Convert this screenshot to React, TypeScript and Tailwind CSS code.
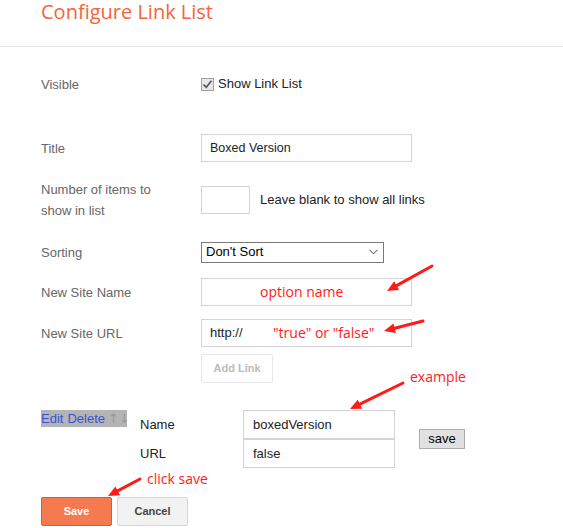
import React from 'react';

const sans = { fontFamily: '"Liberation Sans", Arial, sans-serif' };

function Arrow({ x1, y1, x2, y2 }: { x1: number; y1: number; x2: number; y2: number }) {
  // red annotation arrow, head at (x2, y2)
  const dx = x2 - x1;
  const dy = y2 - y1;
  const len = Math.hypot(dx, dy);
  const ux = dx / len;
  const uy = dy / len;
  const head = 11;
  const bx = x2 - ux * head;
  const by = y2 - uy * head;
  const px = -uy * 5;
  const py = ux * 5;
  return (
    <g>
      <line x1={x1} y1={y1} x2={bx} y2={by} stroke="#ff1a1a" strokeWidth={3} strokeLinecap="round" />
      <polygon points={`${x2},${y2} ${bx + px},${by + py} ${bx - px},${by - py}`} fill="#ff1a1a" />
    </g>
  );
}

function Row({ label, children, className = '' }: { label: React.ReactNode; children: React.ReactNode; className?: string }) {
  return (
    <div className={`flex items-center h-[28px] ${className}`}>
      <div className="w-[160px] shrink-0 text-[13px] leading-[21px] text-[#666]">{label}</div>
      <div className="flex items-center">{children}</div>
    </div>
  );
}

export default function App() {
  return (
    <div className="relative w-[563px] h-[528px] bg-white overflow-hidden" style={sans}>
      <div className="h-[47px] border-b border-[#e5e5e5] pl-[41px]">
        <h1
          className="text-[20px] leading-[24px] text-[#f5643c] font-normal"
          style={{ fontFamily: '"Open Sans", sans-serif' }}
        >
          Configure Link List
        </h1>
      </div>

      <div className="pl-[41px]">
        <Row label="Visible" className="mt-[23px]">
          <span className="w-[13px] h-[13px] border border-[#a0a0a0] bg-[#e6e6e6] flex items-center justify-center">
            <svg width="11" height="11" viewBox="0 0 11 11">
              <path d="M1.5 5.5 L4.2 8.3 L9.5 1.8" fill="none" stroke="#555" strokeWidth="1.6" />
            </svg>
          </span>
          <span className="ml-[4px] text-[13px] text-[#222]">Show Link List</span>
        </Row>

        <Row label="Title" className="mt-[36px]">
          <div className="w-[211px] h-[28px] border border-[#d4d4d4] pl-[8px] flex items-center text-[12.5px] text-[#222]">
            Boxed Version
          </div>
        </Row>

        <Row label={<div className="max-w-[125px]">Number of items to show in list</div>} className="mt-[24px]">
          <div className="w-[49px] h-[28px] border border-[#d4d4d4]" />
          <span className="ml-[10px] text-[13px] text-[#222]">Leave blank to show all links</span>
        </Row>

        <Row label="Sorting" className="mt-[24px]">
          <div className="w-[183px] h-[21px] border border-[#7a7a7a] pl-[4px] pr-[5px] flex items-center justify-between text-[13px] text-black">
            <span>Don't Sort</span>
            <svg width="9" height="6" viewBox="0 0 9 6">
              <path d="M0.5 0.8 L4.5 4.8 L8.5 0.8" fill="none" stroke="#444" strokeWidth="1" />
            </svg>
          </div>
        </Row>

        <Row label="New Site Name" className="mt-[12px]">
          <div className="w-[211px] h-[28px] border border-[#d4d4d4]" />
        </Row>

        <Row label="New Site URL" className="mt-[13px]">
          <div className="w-[211px] h-[28px] border border-[#d4d4d4] pl-[8px] flex items-center text-[13px] text-[#222]">
            http://
          </div>
        </Row>

        <div className="mt-[7px] ml-[160px] w-[72px] h-[29px] border border-[#e8e8e8] rounded-[2px] flex items-center justify-center text-[11px] font-bold text-[#bbb]">
          Add Link
        </div>

        <div className="mt-[27px] flex items-start">
          <div className="w-[86px] h-[17px] bg-[#b4b4b4] flex items-center text-[13px] leading-[17px] whitespace-nowrap">
            <span className="text-[#3456d6]">Edit</span>
            <span className="ml-[4px] text-[#3456d6]">Delete</span>
            <span
              className="ml-[3px] text-[13px] text-[#999]"
              style={{ fontFamily: '"DejaVu Sans", sans-serif' }}
            >
              ↑↓
            </span>
          </div>
          <div className="ml-[13px] flex items-center">
            <div className="flex flex-col">
              <div className="flex items-center h-[29px]">
                <span className="w-[103px] text-[13px] text-[#222]">Name</span>
                <div className="w-[152px] h-[29px] border border-[#d4d4d4] pl-[9px] flex items-center text-[13px] text-[#222]">
                  boxedVersion
                </div>
              </div>
              <div className="flex items-center h-[29px]">
                <span className="w-[103px] text-[13px] text-[#222]">URL</span>
                <div className="w-[152px] h-[29px] border border-[#d4d4d4] pl-[9px] flex items-center text-[13px] text-[#222]">
                  false
                </div>
              </div>
            </div>
            <button className="ml-[24px] w-[46px] h-[20px] bg-[#e1e1e1] border border-[#adadad] text-[13px] leading-[18px] text-black">
              save
            </button>
          </div>
        </div>

        <div className="mt-[29px] flex gap-[5px]">
          <button className="w-[71px] h-[29px] bg-[#f67a4f] border border-[#e05a2c] rounded-[2px] text-[11px] font-bold text-white">
            Save
          </button>
          <button className="w-[71px] h-[29px] bg-[#f2f2f2] border border-[#d6d6d6] rounded-[2px] text-[11px] font-bold text-[#444]">
            Cancel
          </button>
        </div>
      </div>

      {/* red annotations laid over the form */}
      <div
        className="absolute inset-0 pointer-events-none text-[14px] text-[#ff1a1a]"
        style={{ fontFamily: '"Open Sans", sans-serif' }}
      >
        <span className="absolute left-[260px] top-[282px] leading-[20px]">option name</span>
        <span className="absolute left-[273px] top-[323px] leading-[20px]">"true" or "false"</span>
        <span className="absolute left-[410px] top-[367px] leading-[20px]">example</span>
        <span className="absolute left-[147px] top-[469px] leading-[20px]">click save</span>
        <svg className="absolute inset-0" width="563" height="528">
          <Arrow x1={432} y1={266} x2={387} y2={291} />
          <Arrow x1={423} y1={321} x2={384} y2={331} />
          <Arrow x1={403} y1={383} x2={350} y2={409} />
          <Arrow x1={140} y1={479} x2={108} y2={496} />
        </svg>
      </div>
    </div>
  );
}
